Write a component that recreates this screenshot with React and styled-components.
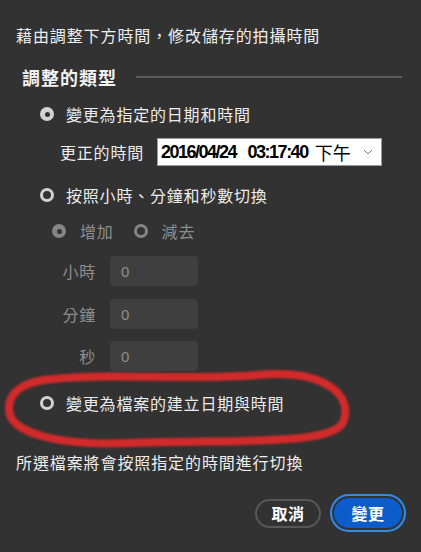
import React from "react";
import styled, { createGlobalStyle } from "styled-components";

const Global = createGlobalStyle`
  html, body { margin: 0; padding: 0; background: #323232; }
  body { font-family: "Noto Sans CJK TC", "Noto Sans", sans-serif; color: #ececec; }
`;

const Page = styled.div`
  position: relative;
  width: 421px;
  height: 552px;
  box-sizing: border-box;
  padding: 24px 19px 0 16px;
  display: flex;
  flex-direction: column;
  overflow: hidden;
`;

const Text = styled.div`
  height: 22px;
  line-height: 22px;
  font-size: 16px;
  letter-spacing: 0.9px;
  color: #eeeeee;
  white-space: nowrap;
  margin-top: ${(p) => p.$mt || 0}px;
`;

const SectionHead = styled.div`
  display: flex;
  align-items: center;
  height: 28px;
  margin-top: 17px;
  padding-left: 6px;
`;

const SectionTitle = styled.div`
  font-size: 18px;
  font-weight: 700;
  letter-spacing: 1px;
  color: #f2f2f2;
  line-height: 28px;
`;

const Rule = styled.div`
  flex: 1;
  height: 2px;
  background: #5c5c5c;
  margin: 0 0 0 19px;
`;

const Row = styled.div`
  display: flex;
  align-items: center;
  height: ${(p) => p.$h || 24}px;
  margin-top: ${(p) => p.$mt || 0}px;
  padding-left: ${(p) => p.$pl || 0}px;
`;

const RadioDot = styled.span`
  box-sizing: border-box;
  width: 14px;
  height: 14px;
  border-radius: 50%;
  background: ${(p) => (p.$dim ? "#858585" : "#d2d2d2")};
  display: flex;
  align-items: center;
  justify-content: center;
  flex: none;
  &::after {
    content: "";
    width: ${(p) => (p.$on ? 5 : 8)}px;
    height: ${(p) => (p.$on ? 5 : 8)}px;
    border-radius: 50%;
    background: #333333;
  }
`;

const RadioLabel = styled.span`
  font-size: 16px;
  letter-spacing: 0.8px;
  line-height: 22px;
  color: ${(p) => (p.$dim ? "#8e8e8e" : "#ececec")};
  margin-left: ${(p) => p.$gap || 12}px;
  margin-right: ${(p) => p.$mr || 0}px;
  white-space: nowrap;
`;

const FieldLabel = styled.span`
  font-size: 16px;
  letter-spacing: 0.8px;
  color: #ececec;
  width: 97px;
  white-space: nowrap;
`;

const Select = styled.div`
  box-sizing: border-box;
  width: 225px;
  height: 28px;
  background: #ffffff;
  border: 1px solid #9a9a9a;
  display: flex;
  align-items: center;
  padding: 0 8px 0 3px;
  color: #000;
`;

const DateText = styled.span`
  font-family: "Liberation Sans", Arial, sans-serif;
  font-size: 18px;
  letter-spacing: -1.5px;
  word-spacing: 8px;
  font-weight: 700;
  white-space: pre;
`;

const Ampm = styled.span`
  font-family: "Noto Sans CJK TC", sans-serif;
  font-size: 18px;
  margin-left: 7px;
  letter-spacing: 0;
`;

const Chevron = styled.svg`
  margin-left: auto;
  flex: none;
`;

const NumLabel = styled.span`
  width: 56px;
  text-align: right;
  font-size: 16px;
  letter-spacing: 0.8px;
  color: #8e8e8e;
  margin-right: 14px;
`;

const NumBox = styled.div`
  box-sizing: border-box;
  width: 88px;
  height: 30px;
  border-radius: 4px;
  background: #3f3f3f;
  color: #8e8e8e;
  font-family: "Liberation Sans", Arial, sans-serif;
  font-size: 15px;
  display: flex;
  align-items: center;
  padding-left: 11px;
`;

const Footer = styled.div`
  display: flex;
  justify-content: flex-end;
  align-items: center;
  margin-top: 25px;
  gap: 13px;
`;

const Button = styled.button`
  box-sizing: border-box;
  height: ${(p) => (p.$primary ? 30 : 29)}px;
  width: ${(p) => (p.$primary ? 68 : 66)}px;
  border-radius: 16px;
  font-family: "Noto Sans CJK TC", sans-serif;
  font-size: 16px;
  font-weight: 700;
  color: #ffffff;
  padding: 0;
  border: ${(p) => (p.$primary ? "none" : "2px solid #575757")};
  background: ${(p) => (p.$primary ? "#0c5ccb" : "transparent")};
  box-shadow: ${(p) =>
    p.$primary ? "0 0 0 2px #323232, 0 0 0 4px #2e8ded" : "none"};
  letter-spacing: 0.5px;
`;

const Annotation = styled.svg`
  position: absolute;
  left: 0;
  top: 0;
  pointer-events: none;
`;

export default function App() {
  return (
    <>
      <Global />
      <Page>
        <Text>藉由調整下方時間，修改儲存的拍攝時間</Text>

        <SectionHead>
          <SectionTitle>調整的類型</SectionTitle>
          <Rule />
        </SectionHead>

        <Row $mt={11} $pl={24}>
          <RadioDot $on />
          <RadioLabel>變更為指定的日期和時間</RadioLabel>
        </Row>

        <Row $mt={12} $h={28} $pl={44}>
          <FieldLabel>更正的時間</FieldLabel>
          <Select>
            <DateText>2016/04/24 03:17:40</DateText>
            <Ampm>下午</Ampm>
            <Chevron width="10" height="6" viewBox="0 0 10 6">
              <path d="M1 1 L5 5 L9 1" fill="none" stroke="#777" strokeWidth="1" />
            </Chevron>
          </Select>
        </Row>

        <Row $mt={17} $pl={24}>
          <RadioDot />
          <RadioLabel>按照小時、分鐘和秒數切換</RadioLabel>
        </Row>

        <Row $mt={12} $pl={36}>
          <RadioDot $on $dim />
          <RadioLabel $dim $gap={14} $mr={20}>增加</RadioLabel>
          <RadioDot $dim />
          <RadioLabel $dim $gap={14}>減去</RadioLabel>
        </Row>

        <Row $mt={13} $h={30} $pl={24}>
          <NumLabel>小時</NumLabel>
          <NumBox>0</NumBox>
        </Row>
        <Row $mt={13} $h={30} $pl={24}>
          <NumLabel>分鐘</NumLabel>
          <NumBox>0</NumBox>
        </Row>
        <Row $mt={12} $h={30} $pl={24}>
          <NumLabel>秒</NumLabel>
          <NumBox>0</NumBox>
        </Row>

        <Row $mt={20} $pl={24}>
          <RadioDot />
          <RadioLabel>變更為檔案的建立日期與時間</RadioLabel>
        </Row>

        <Text $mt={36}>所選檔案將會按照指定的時間進行切換</Text>

        <Footer>
          <Button>取消</Button>
          <Button $primary>變更</Button>
        </Footer>

        <Annotation width="421" height="552" viewBox="0 0 421 552">
          <defs>
            <filter id="soft" x="-10%" y="-30%" width="120%" height="160%">
              <feGaussianBlur stdDeviation="1.2" />
            </filter>
          </defs>
          <path
            d="M 44 380 C 100 372, 190 381, 258 375 C 320 369, 352 392, 344 420 C 337 447, 230 439, 130 443 C 58 446, 10 433, 9 410 C 8 392, 24 383, 44 380 Z"
            fill="none"
            stroke="#d22a2a"
            strokeWidth="8"
            strokeLinejoin="round"
            filter="url(#soft)"
          />
        </Annotation>
      </Page>
    </>
  );
}
